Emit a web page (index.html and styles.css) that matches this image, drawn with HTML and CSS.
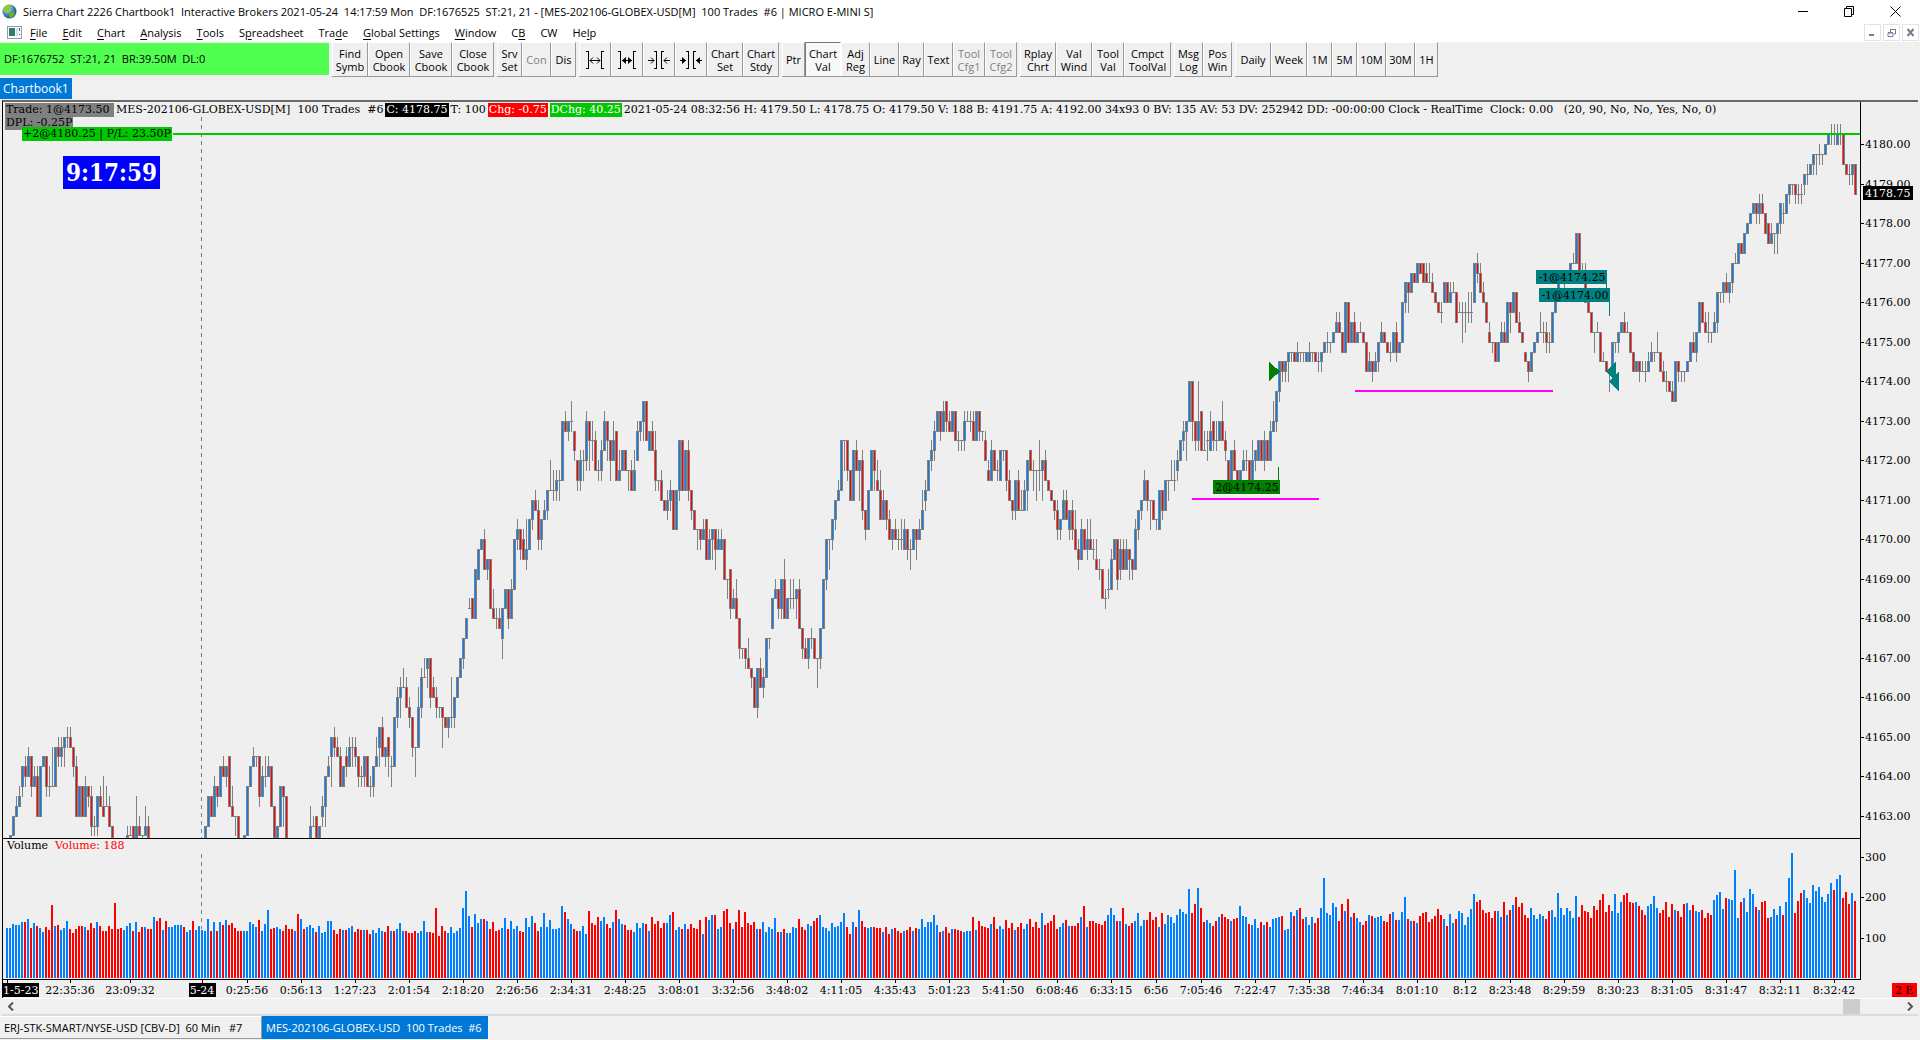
FILE: index.html
```html
<!DOCTYPE html>
<html lang="en">
<head>
  <meta charset="UTF-8">
  <meta name="viewport" content="width=device-width, initial-scale=1.0">
  <title>Sierra Chart 2226 Chartbook1</title>
  <link rel="stylesheet" href="styles.css">
</head>
<body>
  <header class="titlebar">
    <svg class="app-icon" viewBox="0 0 15 15" width="15" height="15">
      <defs>
        <radialGradient id="globe" cx="35%" cy="30%" r="75%">
          <stop offset="0" stop-color="#cfe8f7"/>
          <stop offset="0.5" stop-color="#4a93c8"/>
          <stop offset="1" stop-color="#15507c"/>
        </radialGradient>
      </defs>
      <circle cx="7.5" cy="7.5" r="7" fill="url(#globe)"/>
      <path d="M2 3 Q5 0 9 1 L10 4 L7 6 L7 9 L4 9 Q1 7 2 3Z" fill="#8fc63d"/>
      <path d="M8 8 L12 8 L13 10 Q11 14 8 14 L7 11Z" fill="#6fae2c"/>
    </svg>
    <span class="title">Sierra Chart 2226 Chartbook1  Interactive Brokers 2021-05-24  14:17:59 Mon  DF:1676525  ST:21, 21 - [MES-202106-GLOBEX-USD[M]  100 Trades  #6 | MICRO E-MINI S]</span>
    <div class="win-buttons">
      <button aria-label="Minimize"><svg width="11" height="11"><path d="M0 5.5H10"/></svg></button>
      <button aria-label="Restore"><svg width="11" height="11"><path d="M0.5 2.5H7.5V10.5H0.5ZM2.5 2.5V0.5H9.5V8.5H7.5"/></svg></button>
      <button aria-label="Close"><svg width="11" height="11"><path d="M0.5 0.5L10.5 10.5M10.5 0.5L0.5 10.5"/></svg></button>
    </div>
  </header>

  <nav class="menubar">
    <svg class="doc-icon" width="15" height="13">
      <rect x="0.5" y="0.5" width="14" height="12" fill="#fff" stroke="#999"/>
      <rect x="2" y="2" width="6" height="8" fill="#2e7d74"/>
      <rect x="9" y="2" width="2" height="8" fill="#cde"/>
      <path d="M12.5 2V5M12.5 8V9" stroke="#456"/>
    </svg>
    <button><u>F</u>ile</button>
    <button><u>E</u>dit</button>
    <button><u>C</u>hart</button>
    <button><u>A</u>nalysis</button>
    <button><u>T</u>ools</button>
    <button>S<u>p</u>readsheet</button>
    <button>Tra<u>d</u>e</button>
    <button><u>G</u>lobal Settings</button>
    <button><u>W</u>indow</button>
    <button>C<u>B</u></button>
    <button>CW</button>
    <button>He<u>l</u>p</button>
    <div class="mdi-buttons">
      <button aria-label="Minimize chart"><svg width="9" height="9"><path d="M1 7H6" stroke-width="2"/></svg></button>
      <button aria-label="Restore chart"><svg width="9" height="9"><path d="M1 5H6V8.5H1ZM3.5 4V1.5H8.5V6H7M3 1.5H9M1 4.5H6"/></svg></button>
      <button aria-label="Close chart"><svg width="9" height="9"><path d="M1.5 1L7.5 8M7.5 1L1.5 8" stroke-width="2"/></svg></button>
    </div>
  </nav>

  <div class="toolbar">
    <div class="status">DF:1676752  ST:21, 21  BR:39.50M  DL:0</div>
    <div class="group">
      <button class="w36">Find<br>Symb</button>
      <button class="w42">Open<br>Cbook</button>
      <button class="w42">Save<br>Cbook</button>
      <button class="w42">Close<br>Cbook</button>
    </div>
    <div class="group">
      <button class="w25">Srv<br>Set</button>
      <button class="w29" disabled>Con</button>
      <button class="w25">Dis</button>
    </div>
    <div class="group">
      <button class="w32" aria-label="Widen bars"><svg width="18" height="20"><path d="M2.5 1V19M0 1.5H3M0 18.5H3M15.5 1V19M15 1.5H18M15 18.5H18M4 10.5H14M7 7.5L4 10.5L7 13.5M11 7.5L14 10.5L11 13.5"/></svg></button>
      <button class="w32" aria-label="Widen spacing"><svg width="18" height="20"><path d="M2.5 1V19M0 1.5H3M0 18.5H3M15.5 1V19M15 1.5H18M15 18.5H18M4 10.5H14"/><path class="solid" d="M4 10.5L8 7V14ZM14 10.5L10 7V14Z"/></svg></button>
      <button class="w32" aria-label="Narrow bars"><svg width="22" height="20"><path d="M8.5 1V19M6 1.5H9M6 18.5H9M13.5 1V19M13 1.5H16M13 18.5H16M0 10.5H6M3 7.5L6 10.5L3 13.5M22 10.5H16M19 7.5L16 10.5L19 13.5"/></svg></button>
      <button class="w32" aria-label="Narrow spacing"><svg width="22" height="20"><path d="M8.5 1V19M6 1.5H9M6 18.5H9M13.5 1V19M13 1.5H16M13 18.5H16M0 10.5H6M22 10.5H16"/><path class="solid" d="M6 10.5L2 7V14ZM16 10.5L20 7V14Z"/></svg></button>
      <button class="w36">Chart<br>Set</button>
      <button class="w36">Chart<br>Stdy</button>
    </div>
    <div class="group">
      <button class="w23">Ptr</button>
      <button class="w36 pressed">Chart<br>Val</button>
      <button class="w29">Adj<br>Reg</button>
      <button class="w29">Line</button>
      <button class="w25">Ray</button>
      <button class="w29">Text</button>
      <button class="w32" disabled>Tool<br>Cfg1</button>
      <button class="w32" disabled>Tool<br>Cfg2</button>
    </div>
    <div class="group">
      <button class="w36">Rplay<br>Chrt</button>
      <button class="w36">Val<br>Wind</button>
      <button class="w32">Tool<br>Val</button>
      <button class="w47">Cmpct<br>ToolVal</button>
    </div>
    <div class="group">
      <button class="w29">Msg<br>Log</button>
      <button class="w29">Pos<br>Win</button>
    </div>
    <div class="group">
      <button class="w36">Daily</button>
      <button class="w36">Week</button>
      <button class="w25">1M</button>
      <button class="w25">5M</button>
      <button class="w29">10M</button>
      <button class="w29">30M</button>
      <button class="w23">1H</button>
    </div>
  </div>

  <div class="book-tabs"><button class="active">Chartbook1</button></div>

  <main class="chart">
    <svg id="plot" class="plot"></svg>
    <div class="info">
      <span class="trade">Trade: 1@4173.50 </span>
      <span>MES-202106-GLOBEX-USD[M]  100 Trades  #6</span>
      <span class="close">C: 4178.75</span>
      <span>T: 100</span>
      <span class="chg">Chg: -0.75</span>
      <span class="dchg">DChg: 40.25</span>
      <span>2021-05-24 08:32:56 H: 4179.50 L: 4178.75 O: 4179.50 V: 188 B: 4191.75 A: 4192.00 34x93 0 BV: 135 AV: 53 DV: 252942 DD: -00:00:00 Clock - RealTime  Clock: 0.00   (20, 90, No, No, Yes, No, 0)</span>
    </div>
    <div class="dpl">DPL: -0.25P</div>
    <div class="position">+2@4180.25 | P/L: 23.50P</div>
    <div class="clock">9:17:59</div>
    <div class="volume-label">Volume  <span>Volume: 188</span></div>
  </main>

  <div class="scrollbar">
    <button aria-label="Scroll left"><svg width="8" height="9"><path d="M6 0.5L2 4.5L6 8.5"/></svg></button>
    <div class="track"><div class="thumb"></div></div>
    <button aria-label="Scroll right"><svg width="8" height="9"><path d="M2 0.5L6 4.5L2 8.5"/></svg></button>
  </div>

  <footer class="chart-tabs">
    <button>ERJ-STK-SMART/NYSE-USD [CBV-D]  60 Min   #7</button>
    <button class="active">MES-202106-GLOBEX-USD  100 Trades  #6</button>
  </footer>

  <script src="chart.js"></script>
</body>
</html>
```

FILE: styles.css
```css
* {
  box-sizing: border-box;
}
html, body {
  margin: 0;
  height: 100%;
}
body {
  display: flex;
  flex-direction: column;
  background: #f0f0f0;
  color: #000;
  font: 11px/16px "Open Sans", "Noto Sans", sans-serif;
  overflow: hidden;
}
button {
  font: inherit;
  color: inherit;
  background: none;
  border: 0;
  margin: 0;
  padding: 0;
  white-space: pre;
}
svg {
  display: block;
  fill: none;
  stroke: #000;
}

/* title bar */
.titlebar {
  display: flex;
  align-items: center;
  height: 23px;
  padding: 0 2px;
  background: #fff;
}
.app-icon {
  stroke: none;
  margin-right: 6px;
}
.title {
  flex: 1;
  white-space: pre;
  overflow: hidden;
}
.win-buttons {
  display: flex;
}
.win-buttons button {
  display: flex;
  justify-content: center;
  align-items: center;
  width: 46px;
  height: 20px;
}

/* menu */
.menubar {
  display: flex;
  align-items: center;
  gap: 15px;
  height: 19px;
  padding: 0 1px 0 7px;
  background: #fff;
}
.doc-icon {
  margin-right: -7px;
  stroke: none;
}
.menubar u {
  text-underline-offset: 2px;
}
.mdi-buttons {
  display: flex;
  gap: 2px;
  margin-left: auto;
}
.mdi-buttons button {
  display: flex;
  justify-content: center;
  align-items: center;
  width: 17px;
  height: 17px;
  border: 1px solid #e3e3e3;
}
.mdi-buttons svg {
  stroke: #6d7f93;
}

/* toolbar */
.toolbar {
  display: flex;
  gap: 3px;
  height: 36px;
}
.status {
  width: 329px;
  height: 32px;
  margin-top: 1px;
  padding-left: 4px;
  line-height: 32px;
  background: #50ff50;
  white-space: pre;
}
.group {
  display: flex;
  height: 35px;
  border-bottom: 1px solid #999;
}
.group button {
  display: flex;
  justify-content: center;
  align-items: center;
  border-right: 1px solid #999;
  border-left: 1px solid #fff;
  border-top: 1px solid #fff;
  line-height: 13px;
  text-align: center;
}
.group button:disabled {
  color: #7f7f7f;
}
.group .pressed {
  background: #f8f8f8;
  border-top-color: #777;
  border-left-color: #777;
  border-right-color: #fff;
}
.group .solid {
  fill: #000;
  stroke: none;
}
.w23 { width: 23px; }
.w25 { width: 25px; }
.w29 { width: 29px; }
.w32 { width: 32px; }
.w36 { width: 36px; }
.w42 { width: 42px; }
.w47 { width: 47px; }

/* chartbook tabs */
.book-tabs {
  height: 22px;
}
.book-tabs button {
  height: 21px;
  padding: 0 3px;
  font-size: 12px;
}
.active {
  background: #0078d7;
  color: #fff;
}

/* chart */
.chart {
  position: relative;
  flex: 1;
  min-height: 0;
  margin: 0 2px;
  border-left: 1px solid #000;
  border-top: 2px solid #696969;
  background: #efefef;
  overflow: hidden;
  font: 11px/14px "DejaVu Serif", "Liberation Serif", serif;
}
.plot {
  width: 100%;
  height: 100%;
  stroke: none;
  shape-rendering: crispEdges;
}
.plot text {
  fill: #000;
  text-anchor: middle;
  dominant-baseline: central;
}
.plot .left {
  text-anchor: start;
}
.plot .light {
  fill: #fff;
}
.info, .dpl, .position, .clock, .volume-label {
  position: absolute;
  white-space: pre;
}
.info {
  display: flex;
  gap: 2px;
  left: 2px;
  top: 1px;
}
.trade, .close, .chg, .dchg, .dpl, .position {
  padding: 0 1px;
}
.trade, .dpl {
  background: #808080;
}
.close {
  background: #000;
  color: #fff;
}
.chg {
  background: #f00;
  color: #fff;
}
.dchg {
  background: #00c800;
  color: #fff;
}
.dpl {
  left: 2px;
  top: 14px;
}
.position {
  left: 19px;
  top: 25px;
  background: #00c800;
}
.clock {
  left: 60px;
  top: 54px;
  padding: 0 3px;
  background: #00f;
  color: #fff;
  font: bold 24px/33px "DejaVu Serif Condensed", "DejaVu Serif", serif;
}
.volume-label {
  left: 4px;
  bottom: 145px;
}
.volume-label span {
  color: #f00;
}

/* scrollbar */
.scrollbar {
  display: flex;
  align-items: center;
  height: 18px;
  margin: 0 2px;
  border-top: 1px solid #fff;
  border-bottom: 2px solid #dcdcdc;
}
.scrollbar button {
  display: flex;
  justify-content: center;
  width: 17px;
}
.scrollbar svg {
  stroke: #555;
  stroke-width: 2;
}
.track {
  display: flex;
  justify-content: flex-end;
  flex: 1;
  padding-right: 41px;
}
.thumb {
  width: 17px;
  height: 15px;
  background: #cdcdcd;
}

/* chart tabs */
.chart-tabs {
  display: flex;
  height: 24px;
  padding-bottom: 1px;
}
.chart-tabs button {
  min-width: 262px;
  padding: 0 4px;
  text-align: left;
  border-top: 1px solid #fff;
  border-right: 1px solid #999;
  border-bottom: 1px solid #999;
}
.chart-tabs .active {
  min-width: 226px;
  border-color: #0078d7;
}
```

FILE: chart.js
```js
const svg = document.getElementById('plot');

// chart space: one bar every 3 units, price in quarter-point ticks above 4160
const LEFT = 3, TOP = 102, RIGHT = 1917, AXIS = 1860;
const SPLIT = 838, BASE = 979;
const STEP = 3, FIRST = 7;
const barX = i => FIRST + i * STEP;
const priceY = t => Math.round(144.2 + (80 - t) * 9.875);

// close(2) wick-above(1) wick-below(1), "open:" only where a bar gaps from the last close
const BARS = `
0800 1000 1200 1310 1410 15:1701 1611 1810 1501 1610 1210 1700 1800 1501 1521 1540 1900 1811 1911 2002
2011 1910 1701 1210 1500 1200 1510 1401 1111 1111 1401 1310 1230 13:1320 1110 0900 0800 0800 0800 0910
1010 1010 11:0900 1130 1010 1001 1120 0910 0800 0800 0800 0800 0800 0800 0800 0800 0800 0800 0800 0800
0800 0800 0800 0800 0800 0800 1100 1400 1200 1510 1401 1700 1610 1701 18:1300 1220 1202 0800 0910 1000
1500 1700 1810 1801 1401 1610 1621 1710 1300 0800 1100 1500 1403 0800 0800 0800 0800 0800 0800 0800
0910 1120 1110 12:0800 1100 12:1311 1602 1710 18:2003 1911 1810 1510 1700 18:1711 1910 1912 1811 1601 1611 1801
1500 1511 1701 1820 19:2102 1810 1901 20:1802 17:1712 2200 2411 2512 2520 2310 2211 1901 1903 2320 2611 2620
27:2802 2401 25:2410 2311 2301 2203 2100 2201 2241 2401 2600 2800 3001 3200 33:3310 34:3200 3700 36:3900 4000 3710
3801 3300 3220 3211 3110 30:3302 3500 3201 3510 4000 4111 3901 40:3810 3931 4200 4401 4310 4011 4201 4310
4501 4530 4521 4611 4612 5200 5110 5201 5221 51:4901 48:4601 4811 4812 5211 5003 5022 4710 4711 4911 5210
5002 4802 5020 51:4600 4720 4900 4700 4702 4510 4720 48:5110 5201 5402 5000 49:5100 4910 4621 4601 4410 4300
4411 4511 4100 4500 5001 4500 4900 4511 4301 4100 4102 4001 4110 42:3800 4010 4102 3902 4010 39:4010 3600
3602 37:3301 3410 3220 2901 2901 2801 2720 2601 2300 2701 2510 2611 3000 3001 31:3400 3510 3301 3601 3220
3400 3421 3421 3502 3110 2901 2810 3001 3011 2800 2803 3101 3600 4001 4003 4201 4401 4510 5000 5003
4701 4400 4900 4710 4803 4311 4101 4500 4900 4702 46:4520 4220 4410 4201 4010 4101 4010 4011 4021 39:4110
3901 3912 4100 4002 4110 4320 44:4511 4800 4911 5111 5300 5101 5310 54:5201 5110 5300 5000 5011 5001 5211
5210 5211 5010 5300 5101 5101 50:4810 47:4610 4910 4700 4711 46:4900 4901 4601 4410 4301 4601 4310 4320 4510
4802 49:4700 4712 4703 4732 4803 4610 4500 4400 4301 4111 4201 4410 4210 41:4301 4111 3920 3811 4110 3900
4021 3920 3911 38:3720 3711 3400 3411 35:3521 3810 4000 3601 37:3911 3710 3910 3802 3701 4110 4301 4401 4610
4401 4403 4200 4201 41:4500 4301 4600 4602 4620 4621 47:4811 5000 5111 5203 5600 5202 5001 5241 53:4900 4920
50:5012 49:5120 52:5001 5021 5200 5020 4911 48:4600 4900 4710 4600 4700 4810 4811 4600 4820 4901 48:5000 4800 5011
4800 5110 5220 5501 5801 5701 5801 5902 5901 5800 5910 5901 5901 58:5900 58:5910 5901 5800 5811 5901 6000
6011 6001 6100 6210 6110 5900 6400 6000 6200 6010 6100 6110 6000 5700 5810 5701 5810 6001 6110 6000
5900 5911 6100 5911 6000 6400 6601 6502 6700 6600 6800 6700 68:6600 67:6610 6620 6510 6400 6300 6311 64:6600
6400 6510 6510 6200 63:6310 6313 6312 6321 6321 64:6800 6711 6510 6410 6200 61:6010 6001 5800 6000 6110 6010
6400 6302 6500 6200 6110 6000 59:5800 5701 5900 6000 6100 6120 6111 6011 6011 6300 6500 6600 6600 6601
6700 6800 6810 7100 6700 6610 6420 6300 6100 6102 6110 5800 5810 5700 5702 6000 6001 6101 6200 6110
6110 5900 5700 5800 5701 5710 5711 5810 5910 5901 5920 5700 5610 5611 5500 5410 5800 5701 5701 5701
5800 6000 5910 6101 6400 6200 6110 6121 6101 6210 6501 6501 6601 6510 6601 6801 6810 7000 6900 7100
7200 7300 7400 7301 7411 7310 7100 72:7000 7110 7102 7202 7401 73:7311 7500 7601 7601 7501 7511 7511 76:7701
7711 7800 7901 7902 7911 7901 8000 8100 8111 8111 80:8110 8111 7800 7700 7711 7801 7500`;

// bar heights, b = up tick volume, r = down tick volume
const VOLUME = `
b50 b50 b54 b53 b53 b56 r56 b59 r50 b55 r52 b50 b46 r51 r48 r73 b52 r53 b48 b50 b57 r49 r45 r49 r52 r52 b51 r48 r55 r50
b56 r52 r47 r47 r52 r49 r75 r49 r50 b48 b52 b55 r47 b56 r46 r51 b51 r49 r49 b61 r57 r60 b48 r57 b51 b51 b53 b53 b53 r51
b46 b48 r57 b48 b52 b48 b47 b59 r47 b56 r47 b56 r53 b58 r53 r55 r50 r47 r47 b47 b47 b56 b54 b51 r58 b47 b54 b68 r49 r50
b51 b49 r47 r53 r49 r49 b47 r64 b59 r49 b51 b53 b50 r46 b52 b45 b46 b57 b57 r48 r44 r49 b48 r48 b50 b52 r46 r49 r48 b48
r48 r44 b48 b45 b50 b47 r46 r52 b47 r47 b49 b55 b47 r47 r45 r45 r47 b45 b47 b57 b46 r46 r45 r70 r42 r52 r47 b45 b51 b45
b47 b50 b70 b87 b62 r51 b64 b55 b59 r59 b57 r49 r56 r47 r48 b50 b60 r49 b57 b49 b52 r47 r46 b60 b51 b62 r55 r47 b51 b65
b51 b58 b49 b49 b50 b72 r66 b59 b54 r49 r47 b47 b52 b44 r67 r55 r53 r61 b57 b61 r54 r50 b56 r68 b59 b54 r53 r48
r48 b46 b55 b50 b55 r54 b47 r61 r54 r57 r50 r55 b55 b63 r66 b48 b51 r49 b54 r49 r54 r50 r49 r58 b44 r61 b58 b63 r63 b49
b51 r67 r69 r55 b49 r56 r68 r51 r66 r55 r53 r56 b49 r49 b56 b46 b51 b49 b60 r46 b46 r49 b45 b45 b51 b50 r59 r51 r48 b54
b52 r57 r60 b63 b51 b50 b47 b55 b51 b52 b56 b65 r51 r44 b56 r51 b68 r57 r51 b50 b51 r51 r50 r50 b46 r51 r44 b49 r50 r47
r45 b47 r48 r51 b47 r50 b49 b59 b51 b56 b56 b63 b53 r46 b47 r51 r45 b49 r49 r48 r47 b46 b47 b47 r61 b48 r57 r52 r51 r50
b54 r61 r49 b52 b49 r58 r50 r55 b48 r51 r55 b49 b54 r59 r51 r56 r50 b65 r53 r55 r57 r63 r49 b51 b55 r58 b52 r52 r52 r55
b61 r72 b51 r57 r57 r55 r54 r53 r57 b63 b70 b63 r57 b57 r70 b54 r52 r55 b57 b65 b52 b58 r58 r66 r58 r61 b51 r65 b54 b63
b61 b55 b63 b69 b66 b64 b89 r65 r74 b90 r70 r56 b58 b55 r52 r57 b61 r64 r61 r59 b57 r59 r60 b72 b62 b61 r54 b53 b59 b50
r56 b53 r56 b51 b59 b60 b61 r62 b48 b49 b66 r62 b68 r70 r59 b61 b53 b61 r55 r60 b70 b100 b65 b63 b75 b71 r57 r74 b67 r79
b61 r65 b60 b56 r53 r57 b63 r62 b60 b61 b62 r57 r56 r64 b66 r58 b58 b66 b81 r59
b57 r57 b55 r62 r65 r66 r56 r59 r62 r69 r63 b59 r52 b64 b55 r59 b67 b65 b53 b61 b69 b84 r76 r78 r68 r65 r66 r60 r67 b67
b61 r76 b63 r68 b73 r81 r71 r75 r63 r60 b70 b63 b59 b64 b62 r59 r67 b68 b61 b85 b70 b63 b70 b67 b60 b82 r61 r73 r67 r66
r60 r72 r68 r78 r84 r66 r73 b67 b84 b65 b76 r83 r85 r76 r75 b76 r72 r68 r63 b72 b74 b82 b70 r65 r68 r76 r61 r74 b68 r67
r61 r74 b75 b68 r73 b67 b66 r68 r60 r65 r63 b78 b83 b86 b69 r80 b79 b78 b108 b60 r76 b80 b66 b89 b84 r71 b68 r76 r77 r60
b61 b69 b63 b72 r63 b76 b100 b125 r65 r77 r85 b88 b80 b75 b93 b87 b91 b81 b76 b84 b95 r88 b99 b103 r80 r86 r74 b85 r77`;

const TIMES = [
  [70, '22:35:36'], [130, '23:09:32'], [247, '0:25:56'], [301, '0:56:13'], [355, '1:27:23'],
  [409, '2:01:54'], [463, '2:18:20'], [517, '2:26:56'], [571, '2:34:31'], [625, '2:48:25'],
  [679, '3:08:01'], [733, '3:32:56'], [787, '3:48:02'], [841, '4:11:05'], [895, '4:35:43'],
  [949, '5:01:23'], [1003, '5:41:50'], [1057, '6:08:46'], [1111, '6:33:15'], [1156, '6:56'],
  [1201, '7:05:46'], [1255, '7:22:47'], [1309, '7:35:38'], [1363, '7:46:34'], [1417, '8:01:10'],
  [1465, '8:12'], [1510, '8:23:48'], [1564, '8:29:59'], [1618, '8:30:23'], [1672, '8:31:05'],
  [1726, '8:31:47'], [1780, '8:32:11'], [1834, '8:32:42']
];

const rect = (x, y, w, h, fill) => `<rect x="${x}" y="${y}" width="${w}" height="${h}" fill="${fill}"/>`;
const text = (x, y, s, cls = '') => `<text x="${x}" y="${y}" class="${cls}">${s}</text>`;

function drawBars() {
  let out = '', last = 8;
  BARS.trim().split(/\s+/).forEach((bar, i) => {
    const m = bar.match(/^(?:(\d\d):)?(\d\d)(\d)(\d)/);
    const open = m[1] ? +m[1] : last;
    const close = +m[2];
    const x = barX(i);
    const hi = Math.max(open, close), lo = Math.min(open, close);
    const y1 = priceY(hi), y2 = priceY(lo);
    const w1 = priceY(hi + +m[3]), w2 = priceY(lo - m[4]);
    last = close;
    if (y1 >= SPLIT) return;
    const cut = y => Math.min(y, SPLIT - 1);
    out += rect(x, w1, 1, cut(w2) - w1 + 1, '#808080');
    out += rect(x - 1, y1, 3, cut(y2) - y1 + 1, '#808080');
    if (hi > lo) out += rect(x, y1 + 1, 1, Math.max(cut(y2) - y1 - 1, 0), close > open ? '#0080ff' : '#f00');
  });
  return out;
}

function drawVolume() {
  return VOLUME.trim().split(/\s+/).map((v, i) => {
    const h = +v.slice(1);
    return rect(barX(i) - 1, BASE - 1 - h, 2, h, v[0] === 'b' ? '#0080ff' : '#f00');
  }).join('');
}

function drawAxes(left) {
  let out = rect(left, SPLIT, AXIS - left, 1, '#000') + rect(left, BASE, AXIS - left + 1, 1, '#000');
  out += rect(AXIS, TOP, 1, BASE - TOP, '#000');
  for (let p = 4163; p <= 4180; p++) {
    const y = priceY((p - 4160) * 4);
    out += rect(AXIS, y, 4, 1, '#000') + text(1865, y, p + '.00', 'left');
  }
  [[300, 857], [200, 897], [100, 938]].forEach(([v, y]) => {
    out += rect(AXIS, y, 4, 1, '#000') + text(1865, y, v, 'left');
  });
  out += rect(1863, 186, 50, 14, '#000') + text(1865, 193, '4178.75', 'left light');
  TIMES.forEach(([x, label]) => {
    out += rect(x, BASE, 1, 4, '#000') + text(x, 990, label);
  });
  out += rect(LEFT, 983, 36, 14, '#000') + text(LEFT, 990, '1-5-23', 'left light');
  out += rect(7, BASE, 1, 4, '#000');
  out += rect(202, BASE, 1, 4, '#000');
  out += rect(189, 983, 27, 14, '#000') + text(202, 990, '5-24', 'light');
  out += rect(1892, 983, 25, 14, '#f00') + text(1904, 990, '2 E');
  return out;
}

function drawTrades(left) {
  const start = Math.max(left, 173);
  let out = rect(start, 133, AXIS - start, 2, '#00c800');
  out += '<path d="M201.5 117V838M201.5 854V929" stroke="#808080" stroke-dasharray="4 4"/>';
  out += rect(1355, 390, 198, 2, '#f0f') + rect(1192, 498, 127, 2, '#f0f');
  out += '<path d="M1269 362L1280 371.5L1269 381Z" fill="#008000"/>';
  out += '<path d="M1616 362L1606 371.5L1616 381ZM1619 372L1609 381.5L1619 391Z" fill="#008080"/>';
  out += rect(1278, 467, 1, 14, '#008000') + rect(1213, 480, 67, 14, '#008000') + text(1247, 487, '2@4174.25');
  out += rect(1606, 284, 1, 4, '#008080') + rect(1536, 270, 71, 14, '#008080') + text(1572, 277, '-1@4174.25');
  out += rect(1609, 302, 1, 14, '#008080') + rect(1539, 288, 71, 14, '#008080') + text(1575, 295, '-1@4174.00');
  return out;
}

// the newest bars stay at the right edge when the window is resized
function draw() {
  const left = RIGHT + 1 - svg.clientWidth;
  svg.setAttribute('viewBox', `${left} ${TOP} ${svg.clientWidth} ${svg.clientHeight}`);
  svg.innerHTML = drawBars() + drawVolume() + drawAxes(left) + drawTrades(left);
}

window.addEventListener('resize', draw);
draw();
```
